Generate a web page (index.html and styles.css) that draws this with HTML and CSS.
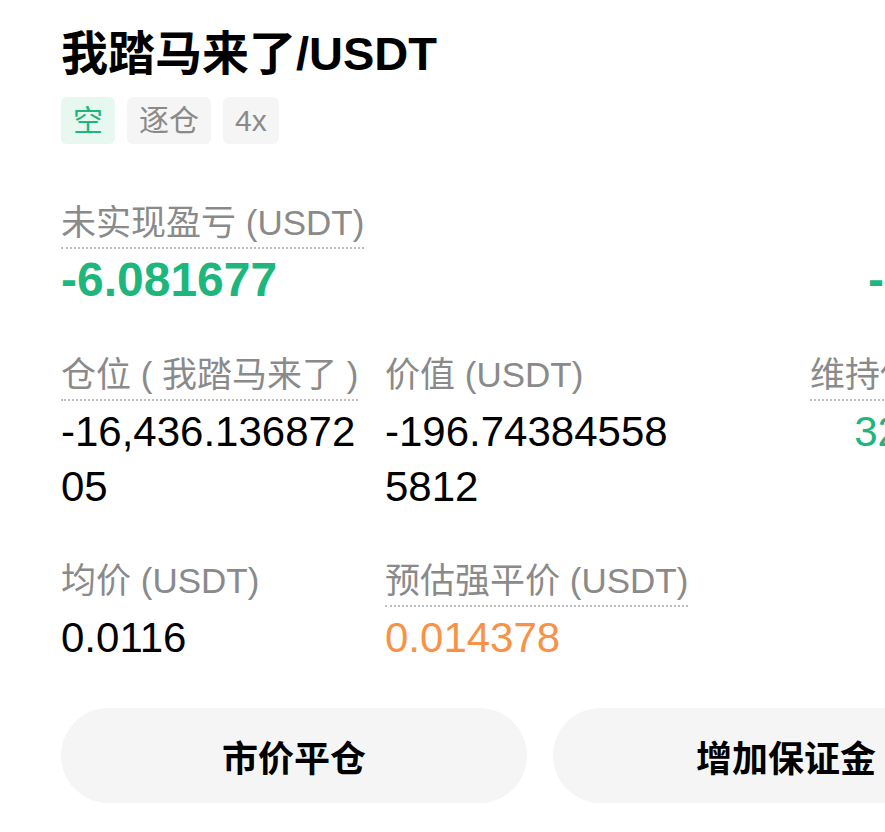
FILE: index.html
```html
<!DOCTYPE html>
<html lang="zh-CN">
<head>
  <meta charset="UTF-8" />
  <meta name="viewport" content="width=device-width, initial-scale=1.0" />
  <title>我踏马来了/USDT 持仓</title>
  <link rel="stylesheet" href="styles.css">
</head>
<body>
  <div class="position">
    <h1 class="pair">我踏马来了/USDT</h1>
    <div class="tags">
      <span class="tag tag-short">空</span>
      <span class="tag">逐仓</span>
      <span class="tag">4x</span>
    </div>

    <div class="row row-first">
      <div class="cell">
        <span class="label dotted">未实现盈亏 (USDT)</span>
        <span class="value value-big green">-6.081677</span>
      </div>
      <div class="cell cell-right">
        <span class="label dotted">收益率</span>
        <span class="value value-big green">-3.09%</span>
      </div>
    </div>

    <div class="row">
      <div class="cell">
        <span class="label dotted">仓位 ( 我踏马来了 )</span>
        <span class="value">-16,436.13687205</span>
      </div>
      <div class="cell cell-mid">
        <span class="label">价值 (USDT)</span>
        <span class="value">-196.743845585812</span>
      </div>
      <div class="cell cell-right">
        <span class="label dotted">维持保证金率</span>
        <span class="value green">328.72%</span>
      </div>
    </div>

    <div class="row">
      <div class="cell">
        <span class="label">均价 (USDT)</span>
        <span class="value">0.0116</span>
      </div>
      <div class="cell cell-mid">
        <span class="label dotted">预估强平价 (USDT)</span>
        <span class="value orange">0.014378</span>
      </div>
    </div>

    <div class="actions">
      <button class="action">市价平仓</button>
      <button class="action">增加保证金</button>
    </div>
  </div>
</body>
</html>
```

FILE: styles.css
```css
* {
  box-sizing: border-box;
}
html, body {
  overflow: hidden;
}
body {
  margin: 0;
  background: #ffffff;
  color: #000000;
  font-family: 'Liberation Sans', 'Noto Sans CJK SC', sans-serif;
}
.position {
  width: 959px;
  margin-left: 61px;
  padding-top: 24px;
}
.pair {
  margin: 0;
  font-size: 47px;
  line-height: 60px;
  font-weight: bold;
  white-space: nowrap;
}
.tags {
  display: flex;
  gap: 12px;
  margin-top: 13px;
}
.tag {
  padding: 0 12px;
  font-size: 30px;
  line-height: 47px;
  border-radius: 6px;
  background: #f5f5f5;
  color: #8a8a8a;
}
.tag-short {
  background: #e6f8f0;
  color: #1db67c;
}
.row {
  display: flex;
  margin-top: 45px;
}
.row-first {
  margin-top: 57px;
}
.cell {
  display: flex;
  flex-direction: column;
  align-items: flex-start;
  width: 300px;
}
.cell-mid {
  margin-left: 24px;
}
.cell-right {
  margin-left: auto;
  align-items: flex-end;
  text-align: right;
  width: auto;
}
.label {
  font-size: 35px;
  line-height: 44px;
  color: #8a8a8a;
  padding-bottom: 2px;
  border-bottom: 2px dotted transparent;
  white-space: nowrap;
}
.label.dotted {
  border-bottom-color: #bdbdbd;
}
.value {
  margin-top: 3px;
  font-size: 42px;
  line-height: 55px;
  word-break: break-all;
}
.value-big {
  font-size: 48px;
  line-height: 56px;
  font-weight: bold;
}
.green {
  color: #1db67c;
}
.orange {
  color: #f79246;
}
.actions {
  display: flex;
  gap: 26px;
  margin-top: 43px;
}
.action {
  width: 466px;
  height: 95px;
  border: none;
  border-radius: 48px;
  background: #f5f5f5;
  color: #000000;
  font-family: inherit;
  font-size: 36px;
  font-weight: bold;
}
```
